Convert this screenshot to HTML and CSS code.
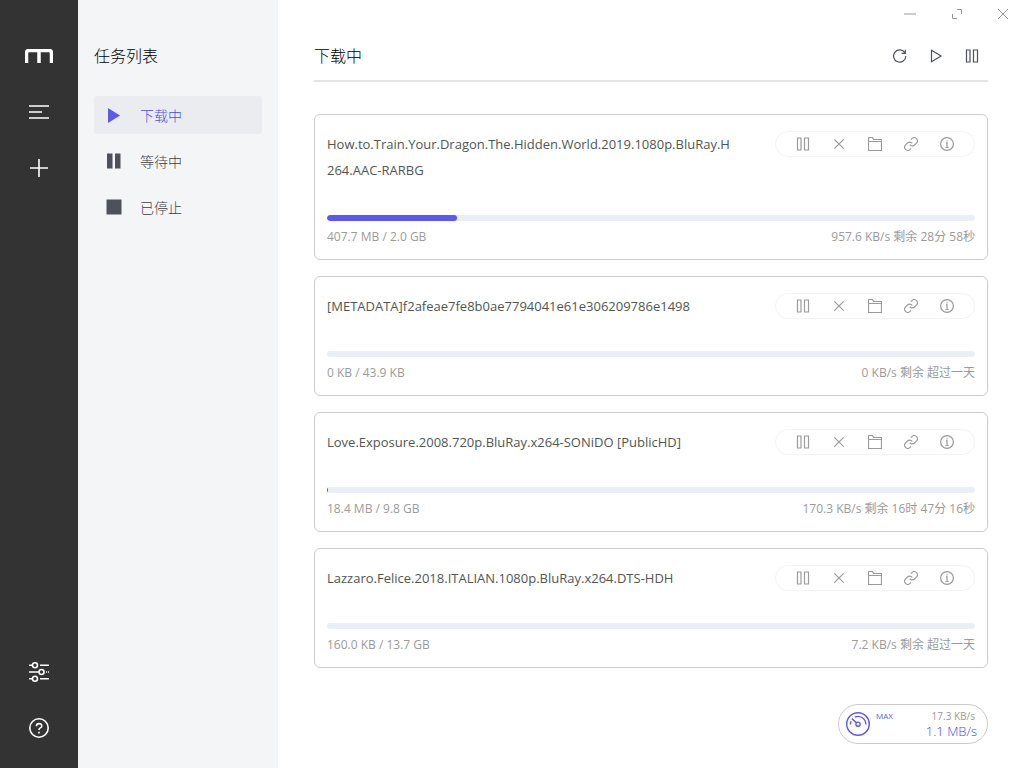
FILE: index.html
```html
<!DOCTYPE html>
<html lang="zh-CN">
<head>
<meta charset="utf-8">
<title>Motrix</title>
<link rel="stylesheet" href="styles.css">
</head>
<body>
<svg class="sprite" aria-hidden="true">
  <symbol id="pause" viewBox="0 0 14 14"><path d="M1.500 1h3.500v12h-3.500zM8.500 1h4v12h-4z"/></symbol>
  <symbol id="close" viewBox="0 0 14 14"><path d="M2.300 2.300l9.400 9.400M11.700 2.300L2.300 11.700"/></symbol>
  <symbol id="folder" viewBox="0 0 14 14"><path d="M.5 13.500V.5h4l1 2h8v11zM.5 4.500h13"/></symbol>
  <symbol id="link" viewBox="1 1 22 22"><path stroke-width="1.800" d="M10 13a5 5 0 0 0 7.540.540l3-3a5 5 0 0 0-7.070-7.070l-1.720 1.710M14 11a5 5 0 0 0-7.540-.540l-3 3a5 5 0 0 0 7.070 7.070l1.710-1.710"/></symbol>
  <symbol id="info" viewBox="0 0 14 14"><circle cx="7" cy="7" r="6.400"/><path d="M6 5.800h1v4.700M5.500 10.500h3M6.500 3.800h1"/></symbol>
</svg>
<div class="app">
  <nav class="rail">
    <div class="rail-group">
      <a class="logo" href="#" aria-label="Motrix"><svg width="28" height="14" viewBox="0 0 28 14"><path d="M1.500 14V4q0-2.500 2.500-2.500h20q2.500 0 2.500 2.500v10M14 1.500V14" stroke-width="3.500"/></svg></a>
      <button class="rail-button" aria-label="任务"><svg width="20" height="14" viewBox="0 0 20 14"><path d="M0 1h20M0 7h13M0 13h20"/></svg></button>
      <button class="rail-button" aria-label="新建"><svg width="18" height="18" viewBox="0 0 18 18"><path d="M0 9h18M9 0v18"/></svg></button>
    </div>
    <div class="rail-group">
      <button class="rail-button" aria-label="设置"><svg width="20" height="20" viewBox="0 0 20 20"><path d="M0 3.300h3M11 3.300h9M0 10h9.500M17 10h1M19 10h1M0 16.700h3M11 16.700h9"/><circle cx="6" cy="3.300" r="2.500"/><circle cx="12.500" cy="10" r="2.500"/><circle cx="6" cy="16.700" r="2.500"/></svg></button>
      <button class="rail-button" aria-label="帮助"><svg width="20" height="20" viewBox="0 0 20 20"><circle cx="10" cy="10" r="9.200"/><path d="M7.400 8.200q0-2.600 2.700-2.600t2.700 2.300q0 1.300-1.500 2-1.300.700-1.300 2.100M10 13.800v1.800"/></svg></button>
    </div>
  </nav>
  <aside class="sidebar">
    <h2 class="heading">任务列表</h2>
    <ul class="menu">
      <li><a class="menu-item active" href="#"><svg width="16" height="16" viewBox="0 0 16 16"><path d="M2 1l12 7.500-12 7.500z"/></svg><span>下载中</span></a></li>
      <li><a class="menu-item" href="#"><svg width="16" height="16" viewBox="0 0 16 16"><path d="M1 .500h5.500v15H1zM9 .500h5.500v15H9z"/></svg><span>等待中</span></a></li>
      <li><a class="menu-item" href="#"><svg width="16" height="16" viewBox="0 0 16 16"><path d="M.500.500h15v15H.500z"/></svg><span>已停止</span></a></li>
    </ul>
  </aside>
  <main class="main">
    <div class="window-controls">
      <button aria-label="最小化"><svg width="12" height="12" viewBox="0 0 12 12"><path d="M0 6h12"/></svg></button>
      <button aria-label="最大化"><svg width="12" height="12" viewBox="0 0 12 12"><path d="M6 1.500h4.500V6M1.500 6v4.500H6"/></svg></button>
      <button aria-label="关闭"><svg width="12" height="12" viewBox="0 0 12 12"><path d="M1 1l10 10M11 1L1 11"/></svg></button>
    </div>
    <header class="panel-header">
      <h1 class="heading">下载中</h1>
      <div class="actions">
        <button aria-label="刷新"><svg width="14" height="14" viewBox="0 0 14 14"><path d="M12 4A6.100 6.100 0 1 0 12.800 7M12.300.700v3.700H8.600"/></svg></button>
        <button aria-label="全部开始"><svg width="14" height="14" viewBox="0 0 14 14"><path d="M2.500 1.200L12 7l-9.500 5.800z"/></svg></button>
        <button aria-label="全部暂停"><svg width="14" height="14"><use href="#pause"/></svg></button>
      </div>
    </header>
    <section class="tasks">
      <article class="task">
        <div class="task-top">
          <h3 class="task-name">How.to.Train.Your.Dragon.The.Hidden.World.2019.1080p.BluRay.H264.AAC-RARBG</h3>
          <div class="task-actions">
            <button aria-label="暂停"><svg><use href="#pause"/></svg></button>
            <button aria-label="删除"><svg><use href="#close"/></svg></button>
            <button aria-label="打开文件夹"><svg><use href="#folder"/></svg></button>
            <button aria-label="复制链接"><svg><use href="#link"/></svg></button>
            <button aria-label="详情"><svg><use href="#info"/></svg></button>
          </div>
        </div>
        <div class="progress"><div class="bar" style="width:20%"></div></div>
        <div class="task-info"><span>407.7 MB / 2.0 GB</span><span>957.6 KB/s 剩余 28分 58秒</span></div>
      </article>
      <article class="task">
        <div class="task-top">
          <h3 class="task-name">[METADATA]f2afeae7fe8b0ae7794041e61e306209786e1498</h3>
          <div class="task-actions">
            <button aria-label="暂停"><svg><use href="#pause"/></svg></button>
            <button aria-label="删除"><svg><use href="#close"/></svg></button>
            <button aria-label="打开文件夹"><svg><use href="#folder"/></svg></button>
            <button aria-label="复制链接"><svg><use href="#link"/></svg></button>
            <button aria-label="详情"><svg><use href="#info"/></svg></button>
          </div>
        </div>
        <div class="progress"><div class="bar" style="width:0%"></div></div>
        <div class="task-info"><span>0 KB / 43.9 KB</span><span>0 KB/s 剩余 超过一天</span></div>
      </article>
      <article class="task">
        <div class="task-top">
          <h3 class="task-name">Love.Exposure.2008.720p.BluRay.x264-SONiDO [PublicHD]</h3>
          <div class="task-actions">
            <button aria-label="暂停"><svg><use href="#pause"/></svg></button>
            <button aria-label="删除"><svg><use href="#close"/></svg></button>
            <button aria-label="打开文件夹"><svg><use href="#folder"/></svg></button>
            <button aria-label="复制链接"><svg><use href="#link"/></svg></button>
            <button aria-label="详情"><svg><use href="#info"/></svg></button>
          </div>
        </div>
        <div class="progress"><div class="bar" style="width:0.18%"></div></div>
        <div class="task-info"><span>18.4 MB / 9.8 GB</span><span>170.3 KB/s 剩余 16时 47分 16秒</span></div>
      </article>
      <article class="task">
        <div class="task-top">
          <h3 class="task-name">Lazzaro.Felice.2018.ITALIAN.1080p.BluRay.x264.DTS-HDH</h3>
          <div class="task-actions">
            <button aria-label="暂停"><svg><use href="#pause"/></svg></button>
            <button aria-label="删除"><svg><use href="#close"/></svg></button>
            <button aria-label="打开文件夹"><svg><use href="#folder"/></svg></button>
            <button aria-label="复制链接"><svg><use href="#link"/></svg></button>
            <button aria-label="详情"><svg><use href="#info"/></svg></button>
          </div>
        </div>
        <div class="progress"><div class="bar" style="width:0%"></div></div>
        <div class="task-info"><span>160.0 KB / 13.7 GB</span><span>7.2 KB/s 剩余 超过一天</span></div>
      </article>
    </section>
    <div class="speedometer">
      <svg width="24" height="24" viewBox="0 0 24 24"><circle cx="12" cy="12" r="11.300"/><path d="M4.400 12.500q0-1.700.700-3.200M8.800 5.100A7.800 7.800 0 0 1 19.800 12.500M5.800 6.600l4.700 4.100"/><circle cx="12" cy="12.200" r="2.100"/></svg>
      <span class="speed-mode">MAX</span>
      <div class="speed-values"><span class="up">17.3 KB/s</span><span class="down">1.1 MB/s</span></div>
    </div>
  </main>
</div>
</body>
</html>
```
FILE: styles.css
```css
* { box-sizing: border-box; }
body {
  margin: 0;
  font-family: "Open Sans", "Noto Sans CJK SC", sans-serif;
  font-size: 14px;
  color: #303133;
  background: #fff;
}
button { border: 0; padding: 0; background: none; color: inherit; font: inherit; cursor: pointer; }
a { color: inherit; text-decoration: none; }
svg { display: block; fill: none; stroke: currentColor; stroke-width: 1; }
.sprite { display: none; }
.app { display: flex; min-height: 100vh; }

.rail {
  flex: 0 0 78px;
  display: flex;
  flex-direction: column;
  justify-content: space-between;
  padding: 44px 0 28px;
  background: #333;
  color: #fff;
}
.rail-group { display: flex; flex-direction: column; align-items: center; gap: 32px; }
.logo, .rail-button { display: grid; place-items: center; width: 24px; height: 24px; }
.logo { width: 28px; }
.rail-button svg { stroke-width: 1.6; }

.sidebar { flex: 0 0 200px; padding: 44px 16px 0; background: #f4f5f7; }
.heading { margin: 0; font-size: 16px; font-weight: 300; line-height: 24px; color: #000; }
.menu { list-style: none; margin: 28px 0 0; padding: 0; display: grid; gap: 8px; }
.menu-item {
  display: flex;
  align-items: center;
  gap: 18px;
  height: 38px;
  padding: 0 12px;
  border-radius: 3px;
  color: #3a3d44;
  font-weight: 300;
}
.menu-item svg { fill: #4d515a; stroke: none; }
.menu-item.active { background: #eaecf0; color: #4a4aec; }
.menu-item.active svg { fill: #5b5bea; }

.main { flex: 1; min-width: 0; padding: 0 36px; position: relative; }
.window-controls {
  position: absolute;
  top: 0;
  right: 0;
  display: flex;
  color: #999;
}
.window-controls button { display: grid; place-items: center; width: 50px; height: 28px; }
.window-controls button:first-child { width: 44px; }
.window-controls button:last-child { width: 42px; }
.panel-header {
  display: flex;
  justify-content: space-between;
  align-items: center;
  padding: 44px 0 12px;
  border-bottom: 2px solid #e4e4e4;
}
.actions { display: flex; gap: 22px; padding-right: 9px; color: #4d515a; }
.actions svg { stroke-width: 1.2; }

.tasks { display: grid; gap: 16px; padding-top: 32px; }
.task { border: 1px solid #ccc; border-radius: 6px; padding: 16px 12px 12px; }
.task-top { display: flex; align-items: flex-start; justify-content: space-between; gap: 40px; }
.task-name {
  margin: 0;
  flex: 1;
  min-width: 0;
  font-size: 13px;
  line-height: 26px;
  font-weight: 400;
  color: #505753;
  word-break: break-all;
}
.task-actions {
  display: flex;
  flex: none;
  padding: 0 9px;
  border: 1px solid #f3f3f3;
  border-radius: 13px;
  color: #9b9b9b;
}
.task-actions button { display: grid; place-items: center; width: 36px; height: 24px; }
.task-actions svg { width: 14px; height: 14px; stroke-width: 1.2; }
.progress { margin-top: 32px; height: 6px; border-radius: 3px; background: #ebeef5; overflow: hidden; }
.bar { height: 6px; border-radius: 3px; background: #5b5bea; }
.task-info {
  display: flex;
  justify-content: space-between;
  margin-top: 6px;
  font-size: 12px;
  line-height: 20px;
  color: #9b9b9b;
}

.speedometer {
  position: absolute;
  right: 36px;
  bottom: 24px;
  display: flex;
  align-items: center;
  width: 150px;
  height: 40px;
  padding: 0 10px 0 7px;
  border: 1px solid #ccc;
  border-radius: 20px;
  background: #fff;
  color: #5b5bea;
}
.speedometer svg { stroke-width: 1.4; }
.speed-mode { align-self: flex-start; margin: 5px 0 0 6px; font-size: 8px; line-height: 12px; }
.speed-values { margin-left: auto; display: grid; justify-items: end; }
.up { padding-right: 2px; font-size: 10px; line-height: 14px; color: #9b9b9b; }
.down { font-size: 13px; line-height: 16px; font-weight: 300; color: #4a4aec; }
```
